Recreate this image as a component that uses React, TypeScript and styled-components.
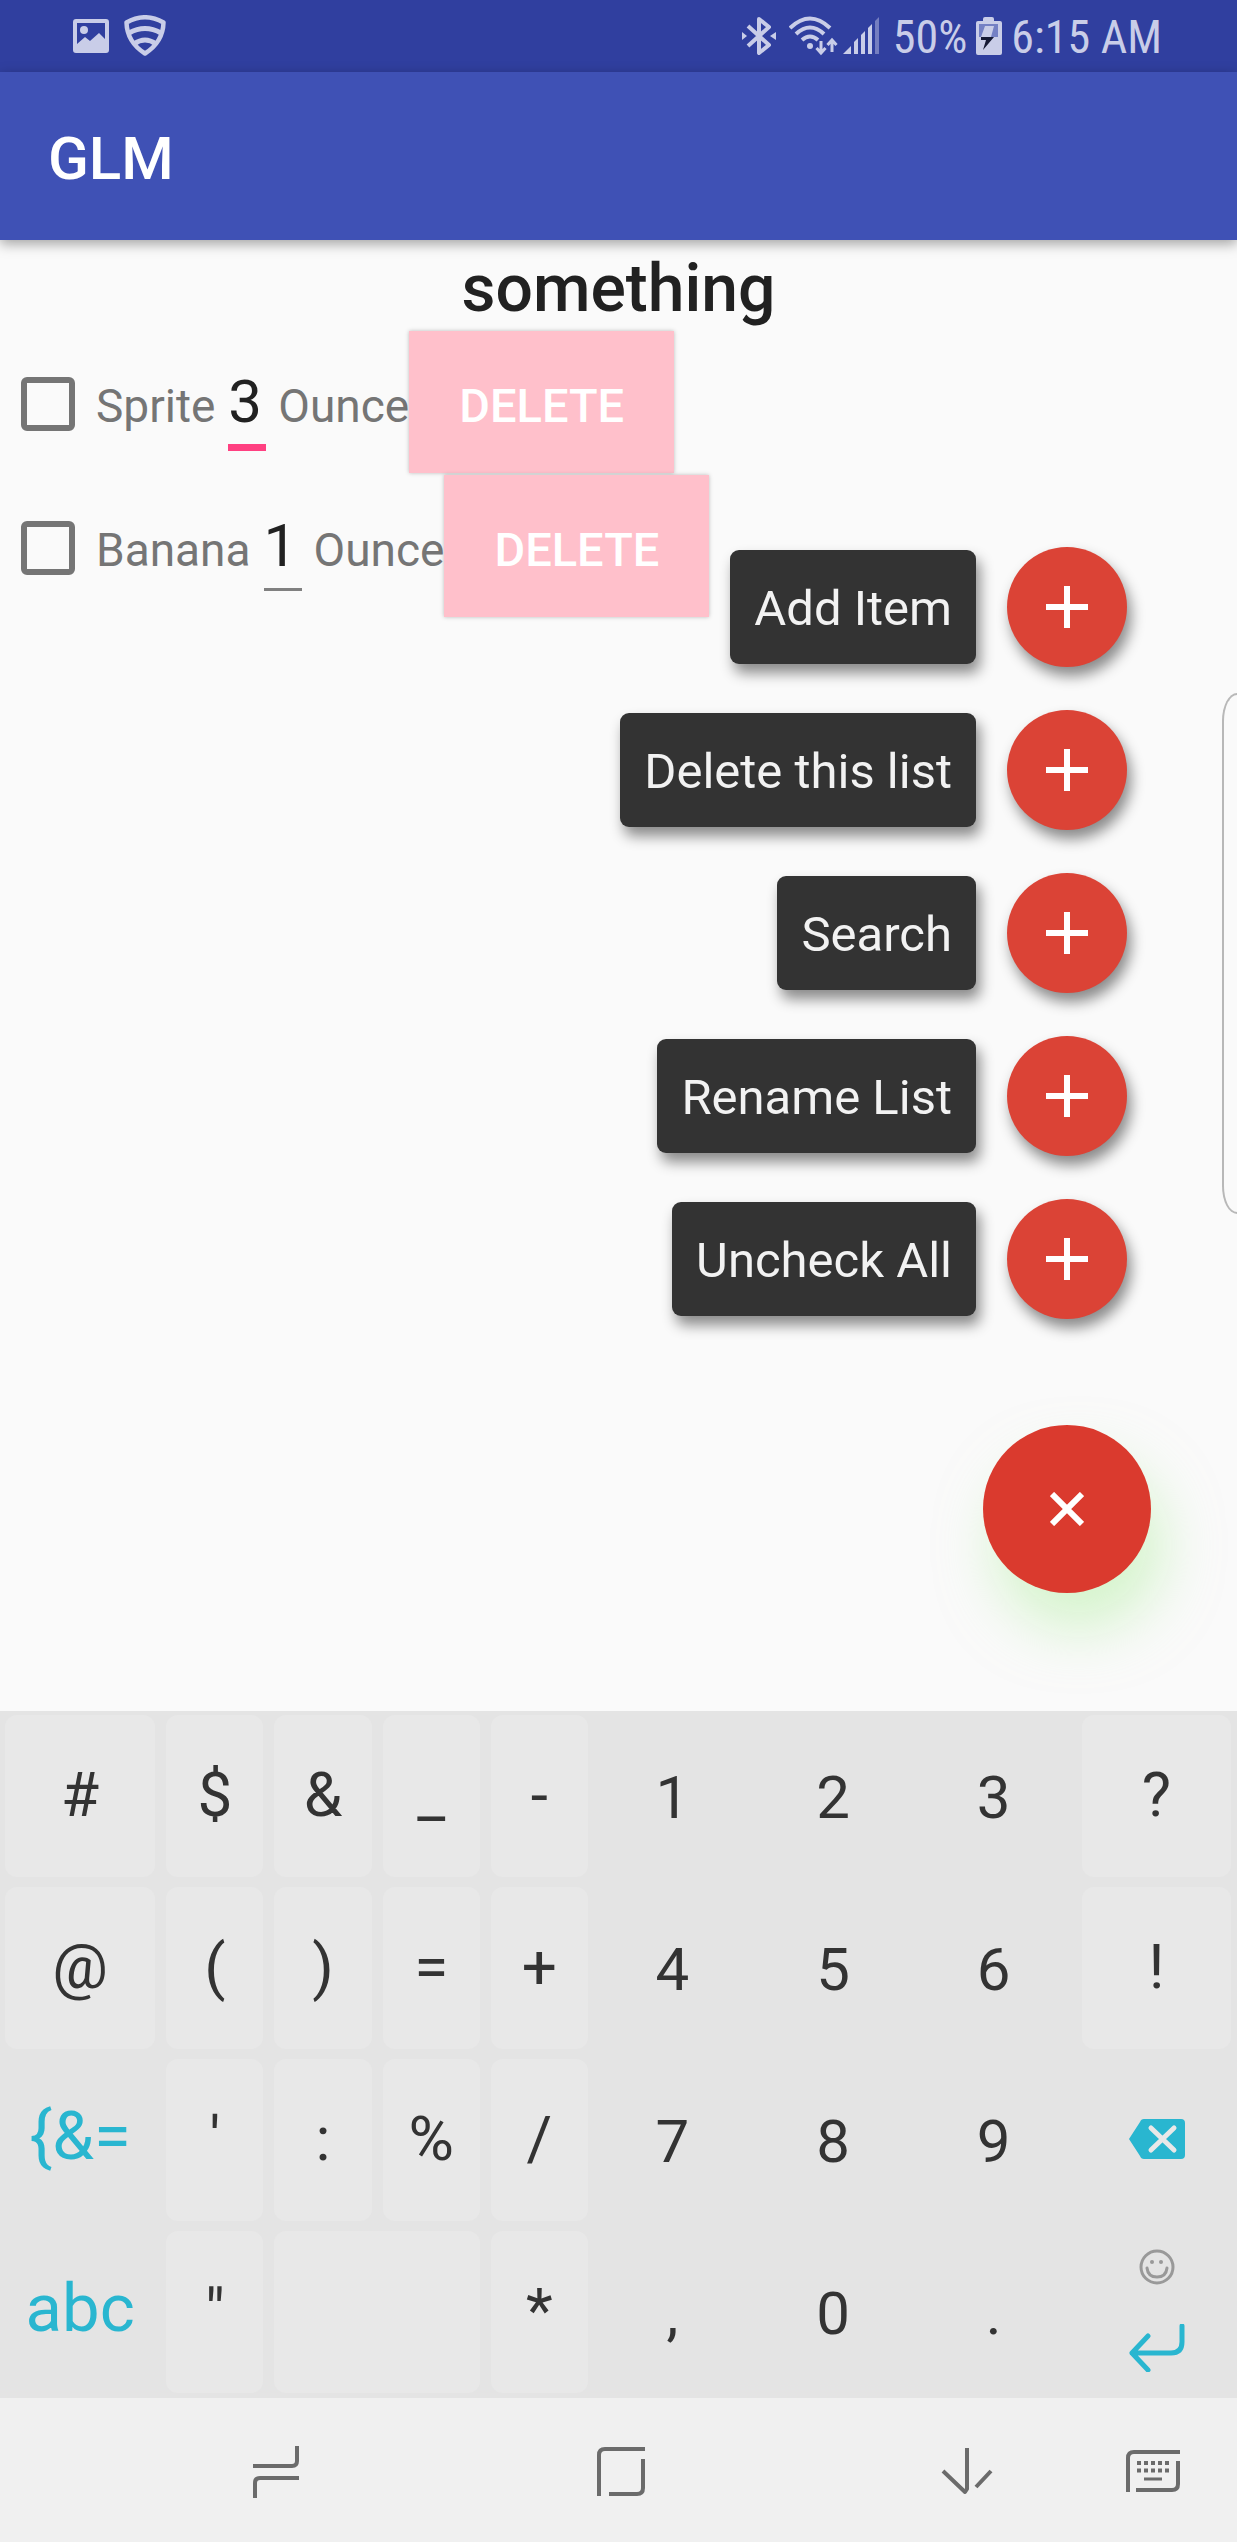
import React, { useState } from "react";
import styled, { createGlobalStyle, css } from "styled-components";

const GlobalStyle = createGlobalStyle`
  *, *::before, *::after { box-sizing: border-box; }
  body { margin: 0; background: #fafafa; font-family: Roboto, "Liberation Sans", sans-serif; }
  button, input { font-family: inherit; margin: 0; }
`;

const Screen = styled.div`
  display: flex;
  flex-direction: column;
  min-height: 100vh;
`;

const buttonReset = css`
  display: flex;
  align-items: center;
  justify-content: center;
  padding: 0;
  border: 0;
  background: none;
  cursor: pointer;
`;

/* ---------- Status bar ---------- */

const StatusBar = styled.div`
  display: flex;
  align-items: center;
  justify-content: space-between;
  height: 72px;
  padding: 0 75px 0 73px;
  background: #303f9f;
  color: #c9cde8;
`;

const StatusGroup = styled.div<{ $gap: number; $inset?: number }>`
  display: flex;
  align-items: center;
  gap: ${(p) => p.$gap}px;
  padding: 0 ${(p) => p.$inset ?? 0}px;
`;

const StatusText = styled.span`
  font-family: "Roboto Condensed", Roboto, "Liberation Sans", sans-serif;
  font-size: 46px;
  line-height: 70px;
  padding-top: 2px;
`;

/* ---------- App bar ---------- */

const AppBar = styled.header`
  position: relative;
  z-index: 1;
  display: flex;
  align-items: center;
  height: 168px;
  padding: 0 48px;
  background: #3f51b5;
  box-shadow: 0 4px 12px rgba(0, 0, 0, 0.35);
`;

const AppTitle = styled.h1`
  margin: 0;
  color: #fff;
  font-size: 60px;
  font-weight: 500;
  line-height: 72px;
  padding-top: 6px;
`;

/* ---------- List ---------- */

const Content = styled.main`
  position: relative;
  flex: 1;
  min-height: 1471px;
`;

const ListTitle = styled.h2`
  margin: 0;
  height: 91px;
  padding-top: 6px;
  color: #212121;
  font-size: 66px;
  font-weight: 500;
  line-height: 85px;
  text-align: center;
`;

const Items = styled.ul`
  display: flex;
  flex-direction: column;
  gap: 2px;
  margin: 0;
  padding: 0;
  list-style: none;
`;

const Item = styled.li`
  display: flex;
  align-items: center;
  height: 142px;
  padding-left: 21px;
`;

const Checkbox = styled.input`
  appearance: none;
  width: 54px;
  height: 54px;
  margin-top: 3px;
  border: 6px solid #757575;
  border-radius: 6px;
  background: transparent;
  &:checked {
    background: #757575;
  }
`;

const ItemText = styled.label`
  padding: 8px 13px 0 21px;
  color: #757575;
  font-size: 46px;
  line-height: 56px;
`;

const UnitText = styled.span`
  padding: 8px 0 0 12px;
  color: #757575;
  font-size: 46px;
  line-height: 56px;
`;

const Quantity = styled.input<{ $active: boolean }>`
  align-self: flex-start;
  width: 38px;
  height: ${(p) => (p.$active ? 93 : 89)}px;
  margin-top: 27px;
  padding: 0;
  border: 0;
  border-bottom: ${(p) => (p.$active ? "7px solid #ff4081" : "3px solid #808080")};
  border-radius: 0;
  outline: 0;
  background: transparent;
  color: #212121;
  font-size: 60px;
`;

const DeleteButton = styled.button`
  ${buttonReset}
  width: 265px;
  height: 142px;
  padding-top: 7px;
  background: #ffc0cb;
  box-shadow: 0 0 4px rgba(0, 0, 0, 0.25);
  color: #fff;
  font-size: 47px;
  font-weight: 500;
`;

/* ---------- Floating menu ---------- */

const FloatingMenu = styled.div`
  position: absolute;
  right: 86px;
  bottom: 118px;
  display: flex;
  flex-direction: column;
  align-items: flex-end;
  gap: 106px;
`;

const ActionList = styled.div`
  display: flex;
  flex-direction: column;
  align-items: flex-end;
  gap: 43px;
  padding-right: 24px;
`;

const ActionRow = styled.div`
  display: flex;
  align-items: center;
  gap: 31px;
`;

const ActionLabel = styled.label`
  padding: 4px 24px 0;
  border-radius: 9px;
  background: #333;
  box-shadow: 4px 9px 14px rgba(0, 0, 0, 0.45);
  color: #f2f2f2;
  font-size: 49px;
  line-height: 110px;
`;

const Fab = styled.button<{ $main?: boolean }>`
  ${buttonReset}
  width: ${(p) => (p.$main ? 168 : 120)}px;
  height: ${(p) => (p.$main ? 168 : 120)}px;
  border-radius: 50%;
  background: ${(p) => (p.$main ? "#da3a2e" : "#db4336")};
  box-shadow: ${(p) =>
    p.$main ? "12px 36px 56px rgba(178, 240, 160, 0.5)" : "4px 9px 14px rgba(0, 0, 0, 0.45)"};
`;

const EdgeHandle = styled.div`
  position: absolute;
  right: 0;
  top: 453px;
  width: 15px;
  height: 521px;
  border: 2px solid #b8b8b8;
  border-right: 0;
  border-radius: 15px 0 0 15px / 28px 0 0 28px;
`;

/* ---------- Keyboard ---------- */

const Keyboard = styled.section`
  display: grid;
  grid-template-columns: 583fr 486fr 149fr;
  gap: 4px;
  padding: 4px 6px 5px 5px;
  background: #e4e4e4;
`;

const Keys = styled.div<{ $columns: string; $gap: number }>`
  display: grid;
  grid-template-columns: ${(p) => p.$columns};
  grid-auto-rows: 162px;
  gap: 10px ${(p) => p.$gap}px;
`;

const NumberKeys = styled(Keys)`
  padding-right: 4px;
`;

const keyFontSize = { symbol: 62, mode: 67, plain: 60 };
const keyPadding = { symbol: "0 0 2px", mode: "0 0 9px", plain: "4px 0 0" };

const Key = styled.button<{ $kind: "symbol" | "mode" | "plain"; $span?: number }>`
  ${buttonReset}
  grid-column: span ${(p) => p.$span ?? 1};
  border-radius: 12px;
  background: ${(p) => (p.$kind === "symbol" ? "#e8e8e8" : "transparent")};
  color: ${(p) => (p.$kind === "mode" ? "#29b6d0" : "#333")};
  font-size: ${(p) => keyFontSize[p.$kind]}px;
  line-height: 72px;
  padding: ${(p) => keyPadding[p.$kind]};
`;

const BackspaceKey = styled(Key)`
  padding: 0 0 3px;
`;

const EnterKey = styled(Key)`
  flex-direction: column;
  justify-content: space-between;
  padding: 18px 0 21px;
`;

/* ---------- Navigation bar ---------- */

const NavBar = styled.nav`
  display: grid;
  grid-template-columns: 190fr 171fr 174fr 171fr 175fr 171fr 16fr 169fr;
  height: 144px;
  background: #f0f0f0;
`;

const NavButton = styled.button<{ $column: number }>`
  ${buttonReset}
  grid-column: ${(p) => p.$column};
  grid-row: 1;
  padding-top: 3px;
`;

/* ---------- Icons ---------- */

const PictureIcon = () => (
  <svg width="36" height="34" viewBox="0 0 36 34">
    <path
      fill="currentColor"
      fillRule="evenodd"
      d="M3 0H33Q36 0 36 3V31Q36 34 33 34H3Q0 34 0 31V3Q0 0 3 0ZM4 4V25L12 18L17 22L26 14L32 20V4Z"
    />
    <circle cx="11" cy="11" r="4" fill="currentColor" />
  </svg>
);

const ShieldIcon = () => (
  <svg width="42" height="42" viewBox="0 0 42 42" fill="none" stroke="currentColor">
    <path
      d="M2.500 7.500Q21-3 39.500 7.500Q39 27 21 38.500Q3 27 2.500 7.500Z"
      strokeWidth="4.500"
      strokeLinejoin="round"
    />
    <path d="M5 18Q21 9 37 18" strokeWidth="5" />
    <path d="M10 29Q21 21 32 29" strokeWidth="5" />
  </svg>
);

const BluetoothIcon = () => (
  <svg width="34" height="40" viewBox="0 0 34 40">
    <path
      d="M6 10L27 29L17 37V3L27 11L6 30"
      fill="none"
      stroke="currentColor"
      strokeWidth="4"
      strokeLinejoin="round"
    />
    <path d="M0 16L5 20L0 24ZM34 16L28 20L34 24Z" fill="currentColor" />
  </svg>
);

const WifiIcon = () => (
  <svg width="50" height="40" viewBox="0 0 50 40" fill="none" stroke="currentColor">
    <path d="M1 12Q21-7 41 12M7 18Q21 5 35 18M13 24Q21 17 29 24" strokeWidth="4" />
    <circle cx="21" cy="30" r="3" fill="currentColor" stroke="none" />
    <path d="M32 25V37M27.500 32L32 37L36.500 32M43 36V24M38.500 29L43 24L47.500 29" strokeWidth="3" />
  </svg>
);

const SignalIcon = () => (
  <svg width="37" height="38" viewBox="0 0 37 38" fill="currentColor">
    <path d="M0 37L8 29V37ZM11 25L15 21V37H11ZM18 18L22 14V37H18ZM25 11L29 7V37H25Z" />
    <path d="M32 4L36 0V37H32Z" opacity="0.45" />
  </svg>
);

const BatteryIcon = () => (
  <svg width="26" height="38" viewBox="0 0 26 38">
    <path d="M7 4V2Q7 0 9 0H16Q18 0 18 2V4H24Q26 4 26 6V36Q26 38 24 38H2Q0 38 0 36V6Q0 4 2 4Z" fill="currentColor" />
    <path d="M3 7H22V20H3Z" fill="#7480c4" />
    <path d="M9 9H18L15 20H5Z" fill="currentColor" />
    <path d="M5 20H18L7 33L10 23H5Z" fill="#161a35" />
  </svg>
);

const PlusIcon = () => (
  <svg width="42" height="42" viewBox="0 0 42 42" fill="none" stroke="#fff" strokeWidth="6">
    <path d="M21 0V42M0 21H42" />
  </svg>
);

const CloseIcon = () => (
  <svg width="34" height="34" viewBox="0 0 34 34" fill="none" stroke="#fff" strokeWidth="6">
    <path d="M2 2L32 32M32 2L2 32" />
  </svg>
);

const BackspaceIcon = () => (
  <svg width="56" height="40" viewBox="0 0 56 40">
    <path d="M15 0H52Q56 0 56 4V36Q56 40 52 40H15Q12 40 11 37L0 20L11 3Q12 0 15 0Z" fill="#29b6d0" />
    <path d="M22 9L45 31M45 9L22 31" stroke="#e8e8e8" strokeWidth="5" strokeLinecap="round" />
  </svg>
);

const SmileyIcon = () => (
  <svg width="36" height="36" viewBox="0 0 36 36" fill="none" stroke="#999" strokeWidth="3">
    <circle cx="18" cy="18" r="16" />
    <path d="M8 19Q9 28 18 28Q27 28 28 19" strokeLinecap="round" />
    <circle cx="13" cy="13" r="2" fill="#999" stroke="none" />
    <circle cx="22" cy="13" r="2" fill="#999" stroke="none" />
  </svg>
);

const EnterIcon = () => (
  <svg width="56" height="48" viewBox="0 0 56 48">
    <path
      d="M53 2V18Q53 29 42 29H3M19 12L3 29L19 46"
      fill="none"
      stroke="#29b6d0"
      strokeWidth="5"
      strokeLinecap="round"
      strokeLinejoin="round"
    />
  </svg>
);

const navStroke = { fill: "none", stroke: "#6b6b6b", strokeWidth: 4 };

const RecentsIcon = () => (
  <svg width="46" height="52" viewBox="0 0 46 52" {...navStroke}>
    <path d="M44 0V15Q44 20 39 20H0M2 52V37Q2 32 7 32H46" />
  </svg>
);

const HomeIcon = () => (
  <svg width="48" height="50" viewBox="0 0 48 50" {...navStroke}>
    <path d="M2 49V8Q2 2 8 2H48M46 12V41Q46 47 40 47H12" />
  </svg>
);

const HideIcon = () => (
  <svg width="52" height="47" viewBox="0 0 52 47" {...navStroke}>
    <path d="M26 0V41L24 44L2 23M50 23L35 39" strokeLinejoin="round" />
  </svg>
);

const KeyboardIcon = () => (
  <svg width="54" height="43" viewBox="0 0 54 43" {...navStroke}>
    <path d="M2 42V8Q2 2 8 2H54M52 11V34Q52 40 46 40H10" />
    <path d="M11 13H43M11 20.500H43" strokeDasharray="4 3" />
    <path d="M18 29H36" strokeWidth="3" />
  </svg>
);

/* ---------- Data ---------- */

const groceries = [
  { id: "sprite", name: "Sprite", quantity: "3", unit: "Ounce" },
  { id: "banana", name: "Banana", quantity: "1", unit: "Ounce" },
];

const actions = ["Add Item", "Delete this list", "Search", "Rename List", "Uncheck All"];

const symbolKeys = [
  "#", "$", "&", "_", "-",
  "@", "(", ")", "=", "+",
  "{&=", "'", ":", "%", "/",
  "abc", "\"", " ", "*",
];

const numberKeys = ["1", "2", "3", "4", "5", "6", "7", "8", "9", ",", "0", "."];

export default function App() {
  const [items, setItems] = useState(groceries);

  const setQuantity = (id: string, quantity: string) =>
    setItems(items.map((item) => (item.id === id ? { ...item, quantity } : item)));

  return (
    <>
      <GlobalStyle />
      <Screen>
        <StatusBar>
          <StatusGroup $gap={15}>
            <PictureIcon />
            <ShieldIcon />
          </StatusGroup>
          <StatusGroup $gap={9}>
            <BluetoothIcon />
            <StatusGroup $gap={4} $inset={4}>
              <WifiIcon />
              <SignalIcon />
            </StatusGroup>
            <StatusText>50%</StatusText>
            <BatteryIcon />
            <StatusText>6:15 AM</StatusText>
          </StatusGroup>
        </StatusBar>
        <AppBar>
          <AppTitle>GLM</AppTitle>
        </AppBar>
        <Content>
          <ListTitle>something</ListTitle>
          <Items>
            {items.map((item, index) => (
              <Item key={item.id}>
                <Checkbox type="checkbox" id={item.id} />
                <ItemText htmlFor={item.id}>{item.name}</ItemText>
                <Quantity
                  $active={index === 0}
                  aria-label={`${item.name} quantity`}
                  value={item.quantity}
                  onChange={(event) => setQuantity(item.id, event.target.value)}
                />
                <UnitText>{item.unit}</UnitText>
                <DeleteButton onClick={() => setItems(items.filter((other) => other.id !== item.id))}>
                  DELETE
                </DeleteButton>
              </Item>
            ))}
          </Items>
          <EdgeHandle />
          <FloatingMenu>
            <ActionList>
              {actions.map((action, index) => (
                <ActionRow key={action}>
                  <ActionLabel htmlFor={`action-${index}`}>{action}</ActionLabel>
                  <Fab id={`action-${index}`}>
                    <PlusIcon />
                  </Fab>
                </ActionRow>
              ))}
            </ActionList>
            <Fab $main aria-label="Close menu">
              <CloseIcon />
            </Fab>
          </FloatingMenu>
        </Content>
        <Keyboard aria-label="Keyboard">
          <Keys $columns="150fr repeat(4, 97fr)" $gap={11}>
            {symbolKeys.map((key) => (
              <Key
                key={key}
                $kind={key.length > 1 ? "mode" : "symbol"}
                $span={key === " " ? 2 : 1}
                aria-label={key === " " ? "Space" : undefined}
              >
                {key}
              </Key>
            ))}
          </Keys>
          <NumberKeys $columns="repeat(3, 1fr)" $gap={0}>
            {numberKeys.map((key) => (
              <Key key={key} $kind="plain">
                {key}
              </Key>
            ))}
          </NumberKeys>
          <Keys $columns="1fr" $gap={0}>
            <Key $kind="symbol">?</Key>
            <Key $kind="symbol">!</Key>
            <BackspaceKey $kind="plain" aria-label="Backspace">
              <BackspaceIcon />
            </BackspaceKey>
            <EnterKey $kind="plain" aria-label="Enter">
              <SmileyIcon />
              <EnterIcon />
            </EnterKey>
          </Keys>
        </Keyboard>
        <NavBar>
          <NavButton $column={2} aria-label="Recent apps">
            <RecentsIcon />
          </NavButton>
          <NavButton $column={4} aria-label="Home">
            <HomeIcon />
          </NavButton>
          <NavButton $column={6} aria-label="Hide keyboard">
            <HideIcon />
          </NavButton>
          <NavButton $column={8} aria-label="Change keyboard">
            <KeyboardIcon />
          </NavButton>
        </NavBar>
      </Screen>
    </>
  );
}
